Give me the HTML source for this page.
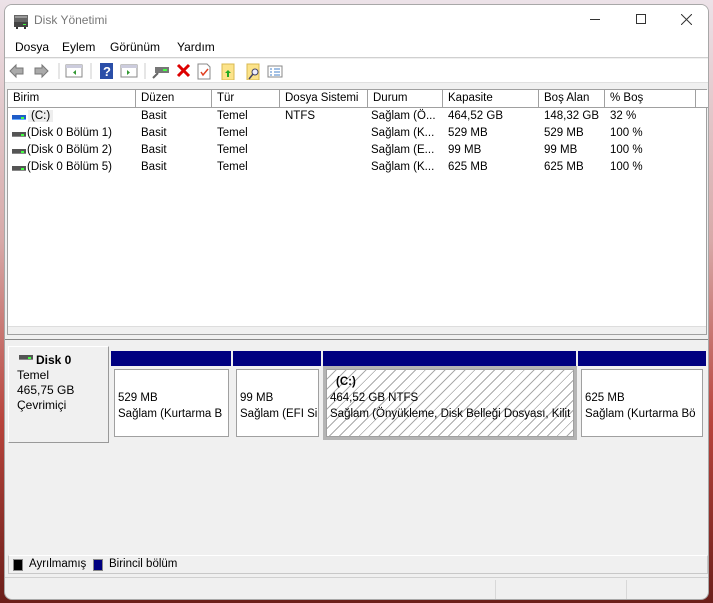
<!DOCTYPE html>
<html><head><meta charset="utf-8"><style>
*{margin:0;padding:0;box-sizing:border-box}
body{width:713px;height:603px;overflow:hidden;position:relative;font-family:"Liberation Sans",sans-serif;font-size:11.5px;color:#000;
background:linear-gradient(180deg,#ece2e8 0%,#d7a9a8 40%,#b8443c 70%,#6b1f1a 100%)}
.win{position:absolute;left:4px;top:4px;width:705px;height:596px;background:#f0f0f0;border:1px solid #a8a8a8;border-radius:8px;overflow:hidden}
.abs{position:absolute}
.title{left:0;top:0;width:705px;height:32px;background:#fff}
.menu{left:0;top:32px;width:705px;height:21px;background:#fff;border-bottom:1px solid #d0d0d0}
.menu span{position:absolute;top:3px;font-size:12px}
.tb{left:0;top:54px;width:705px;height:24px;background:#fff;border-bottom:1px solid #e0e0e0}
.list{left:2px;top:84px;width:700px;height:246px;background:#fff;border:1px solid #a0a0a0}
.hdr{position:absolute;top:0;height:18px;border-right:1px solid #a0a0a0;border-bottom:1px solid #a0a0a0;background:#fff;padding:2px 0 0 5px}
.row{position:absolute;left:0;height:17px;width:690px}
.row span{position:absolute;top:2px}
.hd{display:inline-block;width:14px;height:5px;background:#555;border-bottom:1px solid #888;position:absolute;left:4px;top:7px}
.hd:after{content:"";position:absolute;right:2px;top:2px;width:3px;height:2px;background:#4f4}
.bar{position:absolute;top:346px;height:15px;background:#000080}
.part{position:absolute;top:361px;height:74px;background:#f0f0f0;padding:3px}
.part .in{width:100%;height:100%;background:#fff;border:1px solid #a0a0a0;padding:20px 0 0 3px;line-height:16px;white-space:nowrap;overflow:hidden}
</style></head><body>
<div class="win">
<div class="abs title">
 <svg class="abs" style="left:8px;top:8px" width="16" height="16"><rect x="1" y="2" width="14" height="7" fill="#666"/><rect x="2" y="3" width="12" height="2" fill="#999"/><rect x="1" y="9" width="14" height="5" fill="#444"/><rect x="10" y="11" width="3" height="1" fill="#4f4"/><rect x="3" y="14" width="2" height="2" fill="#333"/><rect x="11" y="14" width="2" height="2" fill="#333"/></svg>
 <span class="abs" style="left:29px;top:8px;color:#777;font-size:12px">Disk Yönetimi</span>
 <span class="abs" style="left:585px;top:14px;width:10px;height:1px;background:#333"></span>
 <span class="abs" style="left:631px;top:9px;width:10px;height:10px;border:1px solid #333"></span>
 <svg class="abs" style="left:676px;top:9px" width="11" height="11"><path d="M0 0L11 11M11 0L0 11" stroke="#333" stroke-width="1"/></svg>
</div>
<div class="abs menu"><span style="left:10px">Dosya</span><span style="left:57px">Eylem</span><span style="left:105px">Görünüm</span><span style="left:172px">Yardım</span></div>
<div class="abs tb">
 <svg class="abs" style="left:3px;top:3px" width="280" height="18">
  <path d="M2 9L8 3V6H15V12H8V15Z" fill="#aaa" stroke="#777"/>
  <path d="M40 9L34 3V6H27V12H34V15Z" fill="#aaa" stroke="#777"/>
  <line x1="51" y1="1" x2="51" y2="17" stroke="#ccc"/>
  <rect x="58" y="3" width="16" height="12" fill="#fff" stroke="#888"/><rect x="58" y="3" width="16" height="3" fill="#ccd"/><path d="M68 8L65 10.5L68 13Z" fill="#393"/>
  <line x1="83" y1="1" x2="83" y2="17" stroke="#ccc"/>
  <rect x="92" y="1" width="13" height="16" fill="#2a4ea8"/><text x="95" y="14" fill="#fff" font-size="13" font-weight="bold" font-family="Liberation Sans">?</text>
  <rect x="113" y="3" width="16" height="12" fill="#fff" stroke="#888"/><rect x="113" y="3" width="16" height="3" fill="#ccd"/><path d="M119 8L122 10.5L119 13Z" fill="#393"/>
  <line x1="137" y1="1" x2="137" y2="17" stroke="#ccc"/>
  <rect x="147" y="5" width="14" height="6" fill="#777"/><rect x="155" y="7" width="4" height="2" fill="#4f4"/><path d="M150 11L145 16" stroke="#666" stroke-width="2"/>
  <path d="M170 3L181 14M181 3L170 14" stroke="#d00" stroke-width="3"/>
  <path d="M190 2H199L202 5V17H190Z" fill="#fff" stroke="#888"/><path d="M193 10L195 13L200 7" stroke="#e04020" fill="none" stroke-width="1.5"/>
  <rect x="214" y="2" width="12" height="16" fill="#fce38a" stroke="#d8b850"/><path d="M220 8L223 11H221V15H219V11H217Z" fill="#2a2"/>
  <rect x="239" y="2" width="12" height="16" fill="#fce38a" stroke="#d8b850"/><circle cx="247" cy="10" r="3" fill="#eef" stroke="#446"/><path d="M245 12L241 17" stroke="#446" stroke-width="1.5"/>
  <rect x="260" y="4" width="14" height="11" fill="#fff" stroke="#888"/><path d="M262 7h2M266 7h6M262 10h2M266 10h6M262 13h2M266 13h6" stroke="#4682c8"/>
 </svg>
</div>
<div class="abs list">
 <div class="hdr" style="left:0;width:128px">Birim</div>
 <div class="hdr" style="left:128px;width:76px">Düzen</div>
 <div class="hdr" style="left:204px;width:68px">Tür</div>
 <div class="hdr" style="left:272px;width:88px">Dosya Sistemi</div>
 <div class="hdr" style="left:360px;width:75px">Durum</div>
 <div class="hdr" style="left:435px;width:96px">Kapasite</div>
 <div class="hdr" style="left:531px;width:66px">Boş Alan</div>
 <div class="hdr" style="left:597px;width:91px">% Boş</div>
 <div class="hdr" style="left:688px;width:12px;border-right:none"></div>
 <div class="row" style="top:18px"><i class="hd" style="background:#1e5cc8;border-bottom-color:#6af"></i><span style="left:20px;background:#eee;padding:0 3px">(C:)</span><span style="left:133px">Basit</span><span style="left:209px">Temel</span><span style="left:277px">NTFS</span><span style="left:363px">Sağlam (Ö...</span><span style="left:440px">464,52 GB</span><span style="left:536px">148,32 GB</span><span style="left:602px">32 %</span></div>
 <div class="row" style="top:35px"><i class="hd"></i><span style="left:19px">(Disk 0 Bölüm 1)</span><span style="left:133px">Basit</span><span style="left:209px">Temel</span><span style="left:363px">Sağlam (K...</span><span style="left:440px">529 MB</span><span style="left:536px">529 MB</span><span style="left:602px">100 %</span></div>
 <div class="row" style="top:52px"><i class="hd"></i><span style="left:19px">(Disk 0 Bölüm 2)</span><span style="left:133px">Basit</span><span style="left:209px">Temel</span><span style="left:363px">Sağlam (E...</span><span style="left:440px">99 MB</span><span style="left:536px">99 MB</span><span style="left:602px">100 %</span></div>
 <div class="row" style="top:69px"><i class="hd"></i><span style="left:19px">(Disk 0 Bölüm 5)</span><span style="left:133px">Basit</span><span style="left:209px">Temel</span><span style="left:363px">Sağlam (K...</span><span style="left:440px">625 MB</span><span style="left:536px">625 MB</span><span style="left:602px">100 %</span></div>
 <div class="abs" style="left:0;top:236px;width:698px;height:8px;background:#f0f0f0;border-top:1px solid #ddd"></div>
</div>
<div class="abs" style="left:0;top:332px;width:705px;height:3px;border-bottom:1px solid #888;background:#f0f0f0"></div>
<div class="abs" style="left:3px;top:341px;width:101px;height:97px;background:#f0f0f0;border-right:1px solid #999;border-bottom:1px solid #999;border-top:1px solid #fff;border-left:1px solid #fff">
 <i class="hd" style="left:10px;top:8px"></i>
 <div class="abs" style="left:27px;top:6px;font-weight:bold;font-size:12px">Disk 0</div>
 <div class="abs" style="left:8px;top:21px;line-height:15px;font-size:12px">Temel<br>465,75 GB<br>Çevrimiçi</div>
</div>
<div class="bar" style="left:106px;width:120px"></div>
<div class="bar" style="left:228px;width:88px"></div>
<div class="bar" style="left:318px;width:253px"></div>
<div class="bar" style="left:573px;width:128px"></div>
<div class="part" style="left:106px;width:121px"><div class="in">529 MB<br>Sağlam (Kurtarma B</div></div>
<div class="part" style="left:228px;width:89px"><div class="in">99 MB<br>Sağlam (EFI Si</div></div>
<div class="part" style="left:318px;width:254px;background:#b4b4b4"><div class="in" style="padding-top:4px;background:repeating-linear-gradient(135deg,#fff 0 6px,#aaa 6px 7px)"><b style="padding-left:6px">(C:)</b><br>464,52 GB NTFS<br>Sağlam (Önyükleme, Disk Belleği Dosyası, Kilit</div></div>
<div class="part" style="left:573px;width:128px"><div class="in">625 MB<br>Sağlam (Kurtarma Bö</div></div>
<div class="abs" style="left:3px;top:550px;width:700px;height:19px;border:1px solid #c8c8c8;border-top-color:#fff">
 <span class="abs" style="left:4px;top:3px;width:10px;height:12px;background:#000;border:1px solid #888"></span>
 <span class="abs" style="left:20px;top:2px">Ayrılmamış</span>
 <span class="abs" style="left:84px;top:3px;width:10px;height:12px;background:#000080;border:1px solid #888"></span>
 <span class="abs" style="left:100px;top:2px">Birincil bölüm</span>
</div>
<div class="abs" style="left:0;top:572px;width:705px;height:1px;background:#d0d0d0"></div>
<div class="abs" style="left:490px;top:575px;width:1px;height:20px;background:#d8d8d8"></div>
<div class="abs" style="left:621px;top:575px;width:1px;height:20px;background:#d8d8d8"></div>
</div>
</body></html>
